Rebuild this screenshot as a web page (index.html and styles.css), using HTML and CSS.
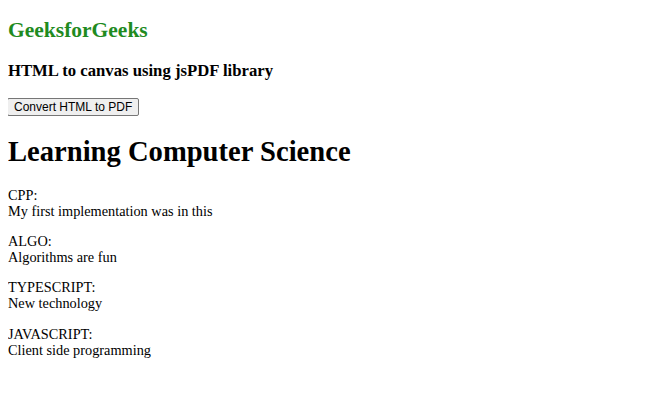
FILE: index.html
```html
<!DOCTYPE html>
<html>
<head>
<meta charset="utf-8">
<title>HTML to canvas using jsPDF</title>
<link rel="stylesheet" href="styles.css">
</head>
<body class="page">
<h2 class="brand">GeeksforGeeks</h2>
<h3 class="subtitle">HTML to canvas using jsPDF library</h3>
<button class="convert-btn">Convert HTML to PDF</button>
<div class="content">
<h1 class="title">Learning Computer Science</h1>
<p class="item">CPP:<br>My first implementation was in this</p>
<p class="item">ALGO:<br>Algorithms are fun</p>
<p class="item">TYPESCRIPT:<br>New technology</p>
<p class="item">JAVASCRIPT:<br>Client side programming</p>
</div>
</body>
</html>
```
FILE: styles.css
```css
.page {
  margin: 8px;
  font-family: "Liberation Serif", "Times New Roman", serif;
  color: #000;
  background: #fff;
}
.brand {
  color: #1f8b1f;
  font-size: 21.5px;
  margin: 10px 0 18px;
}
.subtitle {
  font-size: 16.7px;
  margin: 18px 0 16px;
}
.convert-btn {
  font-family: "Liberation Sans", Arial, sans-serif;
  font-size: 12px;
  line-height: 14px;
  margin-left: -1px;
  padding: 1px 6px;
  border: 1px solid #767676;
  border-radius: 2px;
  background: #efefef;
  color: #000;
}
.title {
  font-size: 28.6px;
  margin: 20px 0 19px;
}
.item {
  font-size: 14.3px;
  line-height: 16px;
  margin: 14px 0;
}
.item:last-child {
  margin-top: 15px;
}
```
